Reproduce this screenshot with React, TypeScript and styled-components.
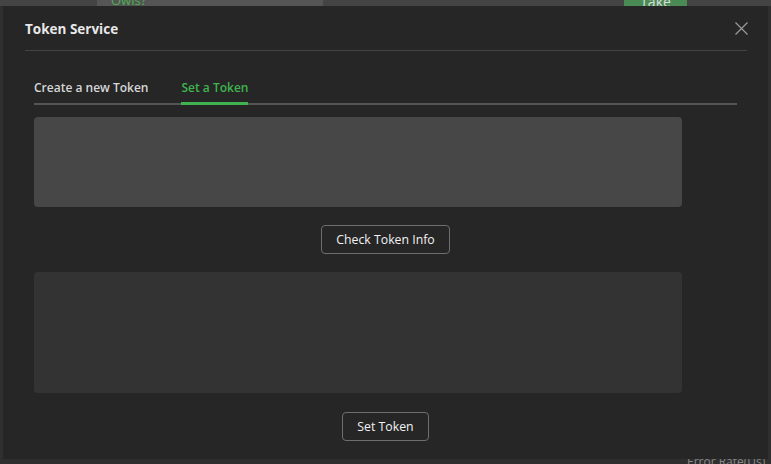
import React from 'react'
import styled, { createGlobalStyle } from 'styled-components'

const GlobalStyle = createGlobalStyle`
  html, body {
    margin: 0;
    padding: 0;
    background: #2f2f2f;
    font-family: "Open Sans", "Noto Sans", Arial, sans-serif;
    overflow: hidden;
  }
`

const Page = styled.div`
  width: 771px;
  height: 464px;
  position: relative;
  background: #2f2f2f;
`

const TopStrip = styled.div`
  display: flex;
  align-items: flex-start;
  height: 6px;
  overflow: hidden;
  background: #444;
`

const Field = styled.div`
  margin-left: 97px;
  width: 226px;
  height: 20px;
  background: #555;
  color: #4caf50;
  font-size: 13px;
  line-height: 1;
  padding-left: 14px;
  box-sizing: border-box;
  margin-top: -6px;
`

const TakeButton = styled.div`
  margin-left: 301px;
  width: 63px;
  height: 20px;
  background: #4a8a55;
  color: #ddd;
  font-size: 14px;
  text-align: center;
  margin-top: -8px;
`

const BottomText = styled.div`
  position: absolute;
  left: 687px;
  bottom: -6px;
  color: #888;
  font-size: 12px;
`

const Modal = styled.div`
  position: absolute;
  left: 3px;
  top: 6px;
  width: 765px;
  height: 453px;
  background: #262626;
  box-sizing: border-box;
  padding: 0 21px 0 21px;
  display: flex;
  flex-direction: column;
`

const Header = styled.div`
  display: flex;
  align-items: center;
  justify-content: space-between;
  height: 44px;
  border-bottom: 1px solid #444;
  margin: 0 0 0 1px;
`

const Title = styled.h2`
  margin: 2px 0 0;
  font-size: 13.5px;
  font-weight: 700;
  color: #e8e8e8;
`

const Close = styled.button`
  background: transparent;
  border: none;
  padding: 0;
  width: 13px;
  height: 13px;
  display: flex;
  margin-right: -1px;
  margin-top: 0;
  cursor: pointer;
`

const Body = styled.div`
  display: flex;
  flex-direction: column;
  padding: 0 10px;
`

const Tabs = styled.div`
  display: flex;
  gap: 33px;
  margin-top: 28px;
  border-bottom: 2px solid #555;
  width: 703px;
`

const Tab = styled.div<{ $active?: boolean }>`
  font-size: 12px;
  font-weight: 600;
  color: ${p => (p.$active ? '#3fb34f' : '#d6d6d6')};
  padding-bottom: 6px;
  margin-bottom: -2px;
  border-bottom: 3px solid ${p => (p.$active ? '#3fb34f' : 'transparent')};
`

const Area = styled.textarea<{ $h: number; $bg: string }>`
  width: 648px;
  height: ${p => p.$h}px;
  background: ${p => p.$bg};
  border: none;
  border-radius: 4px;
  resize: none;
  outline: none;
  box-sizing: border-box;
  padding: 8px;
  color: #ddd;
  font-family: inherit;
`

const ButtonRow = styled.div<{ $top: number; $bottom: number }>`
  display: flex;
  justify-content: center;
  width: 703px;
  margin: ${p => p.$top}px 0 ${p => p.$bottom}px;
`

const Action = styled.button<{ $w: number }>`
  width: ${p => p.$w}px;
  height: 29px;
  background: transparent;
  border: 1px solid #6e6e6e;
  border-radius: 4px;
  color: #f2f2f2;
  font-family: inherit;
  font-size: 12.3px;
  cursor: pointer;
`

const Spacer = styled.div`
  height: 12px;
`

export default function App() {
  return (
    <Page>
      <GlobalStyle />
      <TopStrip>
        <Field>Owls?</Field>
        <TakeButton>Take</TakeButton>
      </TopStrip>
      <BottomText>Error Rate(Us)</BottomText>
      <Modal>
        <Header>
          <Title>Token Service</Title>
          <Close aria-label="close">
            <svg width="13" height="13" viewBox="0 0 13 13">
              <path d="M0.5 0.5 L12.5 12.5 M12.5 0.5 L0.5 12.5" stroke="#9a9a9a" strokeWidth="1.2" />
            </svg>
          </Close>
        </Header>
        <Body>
          <Tabs>
            <Tab>Create a new Token</Tab>
            <Tab $active>Set a Token</Tab>
          </Tabs>
          <Spacer />
          <Area $h={90} $bg="#474747" />
          <ButtonRow $top={18} $bottom={18}>
            <Action $w={129}>Check Token Info</Action>
          </ButtonRow>
          <Area $h={121} $bg="#333333" />
          <ButtonRow $top={19} $bottom={0}>
            <Action $w={87}>Set Token</Action>
          </ButtonRow>
        </Body>
      </Modal>
    </Page>
  )
}
